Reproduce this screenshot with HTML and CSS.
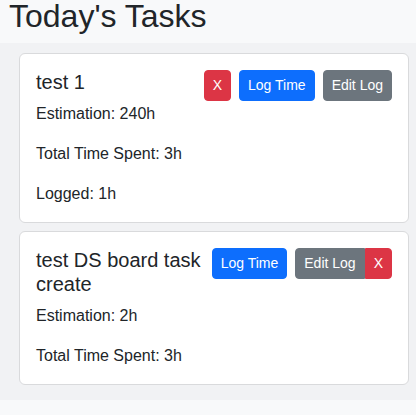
FILE: index.html
```html
<!DOCTYPE html>
<html>
<head>
<meta charset="utf-8">
<link rel="stylesheet" href="styles.css">
</head>
<body>
<header class="page-header">
  <h1 class="page-title">Today's Tasks</h1>
</header>
<main class="panel">
  <div class="card">
    <div class="card-head">
      <h5 class="card-title">test 1</h5>
      <div class="actions">
        <button class="btn btn-danger">X</button>
        <button class="btn btn-primary">Log Time</button>
        <button class="btn btn-secondary">Edit Log</button>
      </div>
    </div>
    <p class="card-text">Estimation: 240h</p>
    <p class="card-text">Total Time Spent: 3h</p>
    <p class="card-text">Logged: 1h</p>
  </div>
  <div class="card">
    <div class="card-head">
      <h5 class="card-title">test DS board task create</h5>
      <div class="actions">
        <button class="btn btn-primary">Log Time</button>
        <span class="pair">
          <button class="btn btn-secondary btn-left">Edit Log</button><button class="btn btn-danger btn-right">X</button>
        </span>
      </div>
    </div>
    <p class="card-text">Estimation: 2h</p>
    <p class="card-text">Total Time Spent: 3h</p>
  </div>
</main>
<footer class="page-footer"></footer>
</body>
</html>
```

FILE: styles.css
```css
* { box-sizing: border-box; }
html, body {
  margin: 0;
  padding: 0;
}
body {
  background: #f8f9fa;
  font-family: "Liberation Sans", Arial, sans-serif;
  color: #212529;
  width: 416px;
  height: 415px;
  overflow: hidden;
}
.page-header {
  height: 43px;
  padding-left: 9px;
  background: #f8f9fa;
}
.page-title {
  margin: 0;
  font-size: 32px;
  line-height: 32px;
  font-weight: 400;
}
.panel {
  background: #f1f2f4;
  padding: 10px 7px 15px 19px;
  display: flex;
  flex-direction: column;
  gap: 8px;
}
.card {
  background: #fff;
  border: 1px solid #d9dadc;
  border-radius: 6px;
  padding: 16px;
}
.card-head {
  display: flex;
  justify-content: space-between;
  align-items: flex-start;
  gap: 8px;
}
.card-title {
  margin: 0 0 8px;
  font-size: 20px;
  line-height: 24px;
  font-weight: 400;
}
.actions {
  display: flex;
  gap: 8px;
  flex-shrink: 0;
}
.pair {
  display: flex;
}
.btn {
  font-family: "Liberation Sans", Arial, sans-serif;
  font-size: 14px;
  line-height: 21px;
  padding: 4px 8px;
  border: 1px solid transparent;
  border-radius: 4px;
  color: #fff;
  cursor: pointer;
}
.btn-danger { background: #dc3545; border-color: #dc3545; }
.btn-primary { background: #0d6efd; border-color: #0d6efd; }
.btn-secondary { background: #6c757d; border-color: #6c757d; }
.btn-left { border-radius: 4px 0 0 4px; }
.btn-right { border-radius: 0 4px 4px 0; }
.card-text {
  margin: 0 0 16px;
  font-size: 16px;
  line-height: 24px;
}
.card-text:last-child { margin-bottom: 0; }
.page-footer {
  margin-left: 9px;
  height: 16px;
  background: #f8f9fa;
}
```
